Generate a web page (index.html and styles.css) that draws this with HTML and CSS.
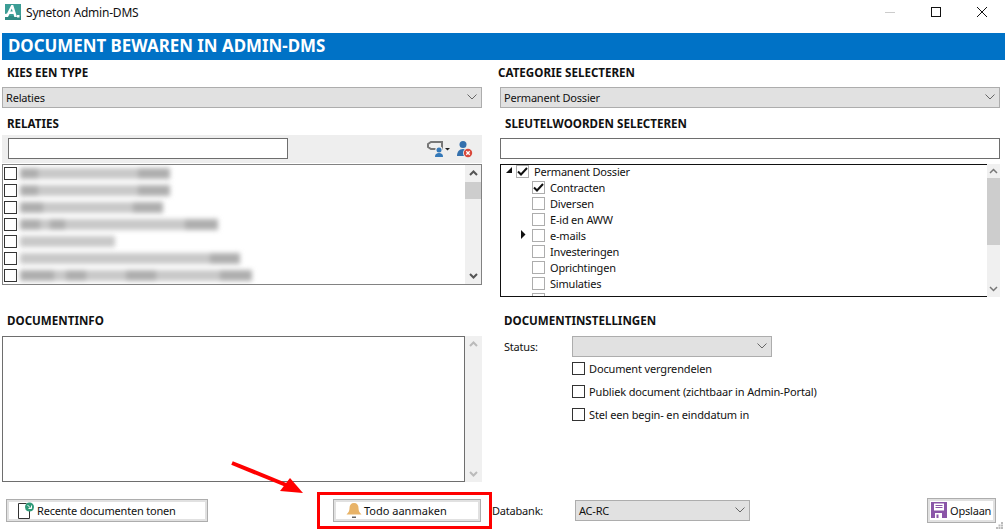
FILE: index.html
```html
<!DOCTYPE html>
<html lang="nl">
<head>
  <meta charset="UTF-8">
  <meta name="viewport" content="width=device-width, initial-scale=1.0">
  <title>Syneton Admin-DMS</title>
  <link rel="stylesheet" href="styles.css">
</head>
<body>
  <div class="window">
    <header class="titlebar">
      <svg class="app-logo" width="16" height="16" viewBox="0 0 16 16">
        <rect width="16" height="16" fill="#3c9d95"/>
        <rect width="16" height="4" y="12" fill="#2f8a83"/>
        <path d="M0 13h3l1.500-3h4l.8 3h2.700L8.200 1H6.300L2 9.500 0 10zM5.300 7.500l1.500-3 .9 3z" fill="#fff"/>
        <rect x="12" y="11" width="2.500" height="2.500" fill="#fff"/>
      </svg>
      <span class="app-name">Syneton Admin-DMS</span>
      <div class="window-controls">
        <svg width="10" height="10" viewBox="0 0 10 10"><path d="M0 5.500h10" stroke="#ccc" fill="none"/></svg>
        <svg width="10" height="10" viewBox="0 0 10 10"><rect x=".5" y=".5" width="9" height="9" stroke="#111" fill="none"/></svg>
        <svg width="10" height="10" viewBox="0 0 10 10"><path d="M0 0l10 10M10 0L0 10" stroke="#111" fill="none"/></svg>
      </div>
    </header>

    <h1 class="banner">DOCUMENT BEWAREN IN ADMIN-DMS</h1>

    <main class="columns">
      <section class="col col-left">
        <h2 class="label label-first">KIES EEN TYPE</h2>
        <div class="select">Relaties<svg class="chev" width="10" height="6" viewBox="0 0 10 6"><path d="M.5.500L5 5 9.500.500" stroke="#666" fill="none"/></svg></div>
        <h2 class="label label-second">RELATIES</h2>
        <div class="toolbar">
          <div class="input input-search"></div>
          <svg class="tool-icons" width="50" height="20" viewBox="0 0 50 20">
            <path d="M2 6l3-2h11v7H5L2 9z" fill="none" stroke="#777" stroke-width="2"/>
            <circle cx="13" cy="12" r="3.800" fill="#eee"/>
            <circle cx="13" cy="12" r="2.500" fill="#3478b8"/>
            <path d="M9 19c0-3 1.500-4 4-4s4 1 4 4z" fill="#3478b8"/>
            <path d="M19 10h5l-2.500 2.500z" fill="#222"/>
            <circle cx="37" cy="6.500" r="3.500" fill="#3470ad"/>
            <path d="M31 18c0-4 2-7 6-7s5 3 5 7z" fill="#3470ad"/>
            <circle cx="42" cy="15" r="5" fill="#eee"/>
            <circle cx="42" cy="15" r="4.200" fill="#d9483b"/>
            <path d="M40.300 13.300l3.400 3.400M43.700 13.300l-3.400 3.400" stroke="#fff" stroke-width="1.300"/>
          </svg>
        </div>
        <div class="listbox">
          <div class="rows">
            <div class="row"><span class="box"></span><span class="blur"><i class="dark" style="width:18px"></i><i style="width:14px"></i><i style="width:86px"></i><i class="dark" style="width:32px"></i></span></div>
            <div class="row"><span class="box"></span><span class="blur"><i class="dark" style="width:18px"></i><i style="width:14px"></i><i style="width:86px"></i><i class="dark" style="width:32px"></i></span></div>
            <div class="row"><span class="box"></span><span class="blur"><i class="dark" style="width:23px"></i><i style="width:90px"></i><i class="dark" style="width:30px"></i></span></div>
            <div class="row"><span class="box"></span><span class="blur"><i class="dark" style="width:20px"></i><i style="width:10px"></i><i class="dark" style="width:15px"></i><i style="width:120px"></i><i class="dark" style="width:33px"></i></span></div>
            <div class="row"><span class="box"></span><span class="blur"><i style="width:95px"></i></span></div>
            <div class="row"><span class="box"></span><span class="blur"><i style="width:190px"></i><i class="dark" style="width:30px"></i></span></div>
            <div class="row"><span class="box"></span><span class="blur"><i class="dark" style="width:34px"></i><i style="width:12px"></i><i class="dark" style="width:20px"></i><i style="width:40px"></i><i class="dark" style="width:30px"></i><i style="width:14px"></i><i style="width:50px"></i><i class="dark" style="width:32px"></i></span></div>
          </div>
          <div class="scrollbar scrollbar-wide">
            <svg width="9" height="6" viewBox="0 0 9 6"><path d="M1 5l3.500-3.500L8 5" stroke="#555" stroke-width="2" fill="none"/></svg>
            <div class="thumb thumb-left"></div>
            <svg class="scroll-down" width="9" height="6" viewBox="0 0 9 6"><path d="M1 1l3.500 3.500L8 1" stroke="#555" stroke-width="2" fill="none"/></svg>
          </div>
        </div>
        <h2 class="label label-info">DOCUMENTINFO</h2>
        <div class="info">
          <div class="textarea"></div>
          <div class="scrollbar scrollbar-info">
            <svg width="9" height="6" viewBox="0 0 9 6"><path d="M1 5l3.500-3.500L8 5" stroke="#bbb" stroke-width="2" fill="none"/></svg>
            <svg class="scroll-down" width="9" height="6" viewBox="0 0 9 6"><path d="M1 1l3.500 3.500L8 1" stroke="#bbb" stroke-width="2" fill="none"/></svg>
          </div>
        </div>
      </section>

      <section class="col col-right">
        <h2 class="label label-first label-cat">CATEGORIE SELECTEREN</h2>
        <div class="select">Permanent Dossier<svg class="chev" width="10" height="6" viewBox="0 0 10 6"><path d="M.5.500L5 5 9.500.500" stroke="#666" fill="none"/></svg></div>
        <h2 class="label label-second label-key">SLEUTELWOORDEN SELECTEREN</h2>
        <div class="toolbar toolbar-plain"><div class="input"></div></div>
        <div class="tree-wrap">
          <div class="tree">
            <div class="node node-top"><svg class="twist" width="8" height="8" viewBox="0 0 8 8"><path d="M7 1v6H1z" fill="#111"/></svg><span class="box box-light"><svg width="11" height="9" viewBox="0 0 11 9"><path d="M1 4.500l3 3 6-6.500" stroke="#111" stroke-width="2" fill="none"/></svg></span>Permanent Dossier</div>
            <div class="node node-sub"><span class="box box-light"><svg width="11" height="9" viewBox="0 0 11 9"><path d="M1 4.500l3 3 6-6.500" stroke="#111" stroke-width="2" fill="none"/></svg></span>Contracten</div>
            <div class="node node-sub"><span class="box box-light"></span>Diversen</div>
            <div class="node node-sub"><span class="box box-light"></span>E-id en AWW</div>
            <div class="node node-sub"><svg class="twist-closed" width="6" height="9" viewBox="0 0 6 9"><path d="M1 0l4.500 4.500L1 9z" fill="#111"/></svg><span class="box box-light"></span>e-mails</div>
            <div class="node node-sub"><span class="box box-light"></span>Investeringen</div>
            <div class="node node-sub"><span class="box box-light"></span>Oprichtingen</div>
            <div class="node node-sub"><span class="box box-light"></span>Simulaties</div>
            <div class="node node-sub"><span class="box box-light"></span></div>
          </div>
          <div class="scrollbar scrollbar-tree">
            <svg width="9" height="6" viewBox="0 0 9 6"><path d="M1 5l3.500-3.500L8 5" stroke="#777" stroke-width="1.500" fill="none"/></svg>
            <div class="thumb thumb-right"></div>
            <svg class="scroll-down" width="9" height="6" viewBox="0 0 9 6"><path d="M1 1l3.500 3.500L8 1" stroke="#777" stroke-width="1.500" fill="none"/></svg>
          </div>
        </div>
        <h2 class="label label-settings">DOCUMENTINSTELLINGEN</h2>
        <div class="settings">
          <span class="status-label">Status:</span>
          <div class="select select-status"><svg class="chev" width="10" height="6" viewBox="0 0 10 6"><path d="M.5.500L5 5 9.500.500" stroke="#666" fill="none"/></svg></div>
          <label class="check"><span class="box"></span>Document vergrendelen</label>
          <label class="check"><span class="box"></span>Publiek document (zichtbaar in Admin-Portal)</label>
          <label class="check"><span class="box"></span>Stel een begin- en einddatum in</label>
        </div>
      </section>
    </main>

    <footer class="footer">
      <button class="btn btn-recent">
        <svg width="16" height="19" viewBox="0 0 16 19"><path d="M.5 2.500h8M.5 2.500v15h11V9" stroke="#333" fill="none"/><circle cx="11.500" cy="6" r="4.500" fill="#2f9a78"/><path d="M9.500 4l3.500 3.500M13.500 4.500v3h-3" stroke="#fff" fill="none"/></svg>
        Recente documenten tonen
      </button>
      <button class="btn btn-todo">
        <svg width="16" height="17" viewBox="0 0 16 17"><path d="M8 1c3 0 4.500 2 4.500 5 0 3 1 4.500 3 6.500H.5c2-2 3-3.500 3-6.500C3.500 3 5 1 8 1z" fill="#e8b368"/><rect x="6" y="14.500" width="4" height="1.500" fill="#666"/></svg>
        Todo aanmaken
      </button>
      <span class="db-label">Databank:</span>
      <div class="select select-db">AC-RC<svg class="chev" width="10" height="6" viewBox="0 0 10 6"><path d="M.5.500L5 5 9.500.500" stroke="#666" fill="none"/></svg></div>
      <button class="btn btn-save">
        <svg width="16" height="16" viewBox="0 0 16 16"><path d="M0 0h16v16H0z" fill="#8a55a8"/><rect x="3" y="1.500" width="10" height="7" fill="#fff"/><path d="M4.500 3.500h7M4.500 5.500h7" stroke="#8a55a8"/><rect x="4" y="11" width="7" height="5" fill="#fff"/><rect x="5.500" y="12.500" width="2" height="3.500" fill="#8a55a8"/></svg>
        Opslaan
      </button>
    </footer>

    <svg class="grip" width="8" height="8" viewBox="0 0 8 8">
      <path d="M5 0h2v2H5zM2.500 2.500h2v2h-2zM5 2.500h2v2H5zM0 5h2v2H0zM2.500 5h2v2h-2zM5 5h2v2H5z" fill="#bbb"/>
    </svg>

    <!-- annotatie over het scherm -->
    <div class="red-box"></div>
    <svg class="red-arrow" width="100" height="45" viewBox="0 0 100 45">
      <path d="M1 2l59 24" stroke="#f00" stroke-width="4" fill="none"/>
      <path d="M72 32L49 30 59 17z" fill="#f00"/>
    </svg>
  </div>
</body>
</html>
```

FILE: styles.css
```css
* {
  box-sizing: border-box;
}

body {
  margin: 0;
  background: #fff;
  font-family: "Noto Sans", Arial, sans-serif;
  font-size: 11px;
  letter-spacing: -0.2px;
  color: #111;
}

.window {
  position: relative;
  width: 1005px;
  height: 531px;
  overflow: hidden;
}

.titlebar {
  height: 33px;
  display: flex;
  align-items: center;
  padding: 0 0 9px 5px;
}

.app-logo {
  margin-right: 5px;
}

.app-name {
  font-size: 12px;
}

.window-controls {
  margin-left: auto;
  display: flex;
  gap: 36px;
  padding-right: 18px;
}

.banner {
  margin: 0 0 0 2px;
  height: 27px;
  padding-left: 6px;
  background: #0072c6;
  color: #fff;
  font-size: 16.9px;
  letter-spacing: 0;
  font-weight: 700;
  line-height: 26px;
}

.columns {
  display: grid;
  grid-template-columns: 480px 500px;
  column-gap: 18px;
  padding-left: 2px;
}

.col {
  display: flex;
  flex-direction: column;
}

.label {
  margin: 0;
  font-size: 11.6px;
  letter-spacing: 0;
  font-weight: 700;
  line-height: 16px;
  height: 16px;
  padding-left: 5px;
}

.label-first {
  margin-top: 5px;
  margin-bottom: 6px;
}

.label-second {
  margin-top: 8px;
  margin-bottom: 3px;
}

.label-info {
  margin-top: 28px;
  margin-bottom: 7px;
}

.label-cat {
  padding-left: 0;
  margin-left: -2px;
}

.label-settings {
  padding-left: 4px;
  margin-top: 16px;
  margin-bottom: 7px;
}

.select {
  position: relative;
  height: 21px;
  flex: none;
  border: 1px solid #adadad;
  background: #e1e1e1;
  padding-left: 3px;
  line-height: 19px;
}

.chev {
  position: absolute;
  right: 4px;
  top: 6px;
}

.toolbar {
  height: 28px;
  background: #eee;
  padding: 3px 6px;
  display: flex;
  justify-content: space-between;
}

.toolbar-plain {
  background: #fff;
  padding: 3px 0;
}

.input {
  width: 100%;
  height: 21px;
  background: #fff;
  border: 1px solid #6e6e6e;
}

.input-search {
  width: 280px;
}

.tool-icons {
  flex: none;
}

.listbox {
  margin-top: 1px;
  height: 121px;
  border: 1px solid #828282;
  display: flex;
}

.rows {
  flex: 1;
  padding-left: 1px;
  overflow: hidden;
}

.row {
  height: 17px;
  display: flex;
  align-items: center;
  gap: 3px;
}

.box {
  flex: none;
  width: 13px;
  height: 13px;
  border: 1px solid #333;
  background: #fff;
  display: inline-flex;
  align-items: center;
  justify-content: center;
}

.box-light {
  border-color: #adadad;
}

/* namen zijn onleesbaar gemaakt in de schermafbeelding */
.blur {
  display: flex;
  height: 11px;
  filter: blur(2.5px);
}

.blur i {
  background: #c8c8c8;
}

.blur .dark {
  background: #aeaeae;
}

.scrollbar {
  flex: none;
  background: #f0f0f0;
  display: flex;
  flex-direction: column;
  align-items: center;
  padding-top: 5px;
}

.scrollbar-wide {
  width: 16px;
}

.scrollbar-info {
  width: 17px;
}

.scrollbar-tree {
  width: 13px;
  padding-top: 4px;
}

.scroll-down {
  margin-top: auto;
  margin-bottom: 5px;
}

.thumb {
  background: #cdcdcd;
  width: 100%;
}

.thumb-left {
  margin-top: 6px;
  height: 17px;
}

.thumb-right {
  margin-top: 4px;
  height: 67px;
}

.info {
  display: flex;
  height: 146px;
}

.textarea {
  flex: 1;
  border: 1px solid #6e6e6e;
}

.tree-wrap {
  margin-top: 1px;
  height: 133px;
  display: flex;
}

.tree {
  flex: 1;
  border: 1px solid #111;
  border-right-width: 0;
  overflow: hidden;
}

.node {
  position: relative;
  height: 16px;
  display: flex;
  align-items: center;
  padding-left: 15px;
  gap: 5px;
}

.node-top {
  margin-top: -2px;
}

.node-sub {
  padding-left: 31px;
}

.twist {
  position: absolute;
  left: 4px;
  top: 3px;
}

.twist-closed {
  position: absolute;
  left: 19px;
  top: 3px;
}

.settings {
  display: grid;
  grid-template-columns: 72px 200px;
}

.status-label {
  padding-left: 4px;
  line-height: 21px;
}

.select-status {
  width: 200px;
}

.check {
  grid-column: 2 / 4;
  display: flex;
  align-items: center;
  gap: 4px;
  height: 23px;
  white-space: nowrap;
  letter-spacing: -0.15px;
}

.footer {
  position: absolute;
  left: 0;
  right: 0;
  top: 497px;
  height: 26px;
  display: flex;
  align-items: center;
}

.btn {
  font: inherit;
  letter-spacing: inherit;
  color: inherit;
  height: 23px;
  background: #fff;
  border: 1px solid #adadad;
  box-shadow: inset 0 0 0 2px #e1e1e1;
  display: flex;
  align-items: center;
  padding: 0;
}

.btn-recent {
  margin-left: 6px;
  width: 202px;
  padding-left: 11px;
  gap: 3px;
}

.btn-todo {
  margin-left: 125px;
  width: 148px;
  padding-left: 12px;
  gap: 2px;
  letter-spacing: 0;
}

.db-label {
  margin-left: 11px;
  width: 83px;
}

.select-db {
  width: 175px;
}

.btn-save {
  margin-left: 177px;
  width: 69px;
  height: 25px;
  padding-left: 3px;
  gap: 3px;
}

.grip {
  position: absolute;
  right: 1px;
  bottom: 1px;
}

.red-box {
  position: absolute;
  left: 317px;
  top: 492px;
  width: 175px;
  height: 37px;
  border: 3px solid #f00;
}

.red-arrow {
  position: absolute;
  left: 231px;
  top: 461px;
}
```
